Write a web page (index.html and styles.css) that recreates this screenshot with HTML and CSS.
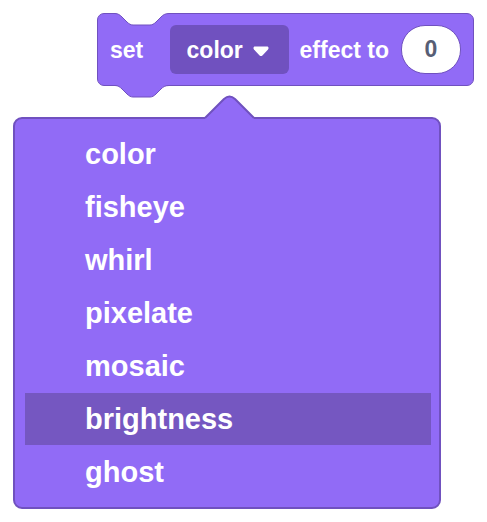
FILE: index.html
```html
<!DOCTYPE html>
<html lang="en">
<head>
<meta charset="utf-8">
<meta name="viewport" content="width=device-width, initial-scale=1">
<title>Set effect block</title>
<link rel="stylesheet" href="styles.css">
</head>
<body>
<main class="workspace">
  <form class="block">
    <svg class="notch notch-top" width="60" height="14" viewBox="0 0 60 14" aria-hidden="true">
      <path class="notch-gap" d="M3 0V.5C6 .5 8 2 10 4L15 9C17 11 19 12 21 12H38C40 12 42 11 44 9L49 4C51 2 53 .5 57 .5V0Z"/>
      <path class="notch-line" d="M3 .5C6 .5 8 2 10 4L15 9C17 11 19 12 21 12H38C40 12 42 11 44 9L49 4C51 2 53 .5 57 .5"/>
    </svg>
    <label class="word" for="effect">set</label>
    <span class="dropdown">
      <select class="dropdown-field" id="effect">
        <option selected>color</option>
        <option>fisheye</option>
        <option>whirl</option>
        <option>pixelate</option>
        <option>mosaic</option>
        <option>brightness</option>
        <option>ghost</option>
      </select>
      <svg class="arrow" width="16" height="11" viewBox="0 0 16 11" aria-hidden="true">
        <path d="M2 .5H14C15.6 .5 16 2.200 15 3.400L9.400 9.400Q8 10.800 6.600 9.400L1 3.400C0 2.200 .4 .5 2 .5Z"/>
      </svg>
    </span>
    <label class="word" for="amount">effect to</label>
    <input class="amount" id="amount" type="text" inputmode="numeric" value="0">
    <svg class="notch notch-bottom" width="60" height="14" viewBox="0 0 60 14" aria-hidden="true">
      <path class="notch-fill" d="M3 0V1.500C6 1.500 8 3 10 5L15 10C17 12 19 13 21 13H38C40 13 42 12 44 10L49 5C51 3 53 1.500 57 1.500V0Z"/>
      <path class="notch-line" d="M3 1.500C6 1.500 8 3 10 5L15 10C17 12 19 13 21 13H38C40 13 42 12 44 10L49 5C51 3 53 1.500 57 1.500"/>
    </svg>
  </form>
  <div class="menu">
    <svg class="pointer" width="52" height="26" viewBox="0 0 52 26" aria-hidden="true">
      <path class="pointer-fill" d="M1 26V23L20 4Q25.500 -1 31 4L50 23V26Z"/>
      <path class="pointer-line" d="M1 23L20 4Q25.500 -1 31 4L50 23"/>
    </svg>
    <ul class="options" role="listbox" aria-label="Effect">
      <li class="option" role="option">color</li>
      <li class="option" role="option">fisheye</li>
      <li class="option" role="option">whirl</li>
      <li class="option" role="option">pixelate</li>
      <li class="option" role="option">mosaic</li>
      <li class="option option-active" role="option">brightness</li>
      <li class="option" role="option">ghost</li>
    </ul>
  </div>
</main>
</body>
</html>
```
FILE: styles.css
```css
:root {
  --purple: #916bf6;
  --purple-dark: #7051bf;
  --purple-hover: #7557c1;
}

* {
  box-sizing: border-box;
}

body {
  margin: 0;
  background: #fff;
  color: #fff;
  font-family: "Liberation Sans", Arial, sans-serif;
  font-weight: bold;
}

.workspace {
  padding: 13px;
}

.block {
  position: relative;
  display: flex;
  align-items: center;
  height: 73px;
  margin-left: 84px;
  padding: 0 12px;
  border: 1px solid var(--purple-dark);
  border-radius: 7px;
  background: var(--purple);
  font-size: 23px;
}

.notch {
  position: absolute;
  left: 14px;
}

.notch-top {
  top: -1px;
}

.notch-bottom {
  top: 70px;
}

.notch-gap {
  fill: #fff;
}

.notch-fill,
.pointer-fill {
  fill: var(--purple);
}

.notch-line,
.pointer-line {
  fill: none;
  stroke: var(--purple-dark);
}

.pointer-line {
  stroke-width: 2;
}

.word {
  padding-top: 2px;
  white-space: nowrap;
}

.dropdown {
  position: relative;
  flex: none;
  margin: 0 11px 0 auto;
}

.dropdown-field {
  display: block;
  width: 119px;
  height: 49px;
  padding: 0 32px 0 17px;
  border: 0;
  border-radius: 6px;
  appearance: none;
  background: var(--purple-dark);
  color: inherit;
  font: inherit;
}

.arrow {
  position: absolute;
  top: 21px;
  right: 20px;
  fill: #fff;
  pointer-events: none;
}

.amount {
  width: 60px;
  height: 49px;
  margin-left: 12px;
  padding: 0;
  border: 1px solid var(--purple-dark);
  border-radius: 24px;
  background: #fff;
  color: #575e75;
  font: inherit;
  text-align: center;
}

.menu {
  position: relative;
  margin: 31px 33px 0 0;
  padding: 9px 8px 9px 10px;
  border: 2px solid var(--purple-dark);
  border-radius: 9px;
  background: var(--purple);
}

.pointer {
  position: absolute;
  top: -24px;
  left: 189px;
}

.options {
  display: grid;
  gap: 1px;
  margin: 0;
  padding: 0;
  list-style: none;
}

.option {
  padding-left: 60px;
  font-size: 29px;
  line-height: 52px;
}

.option-active {
  background: var(--purple-hover);
}
```
